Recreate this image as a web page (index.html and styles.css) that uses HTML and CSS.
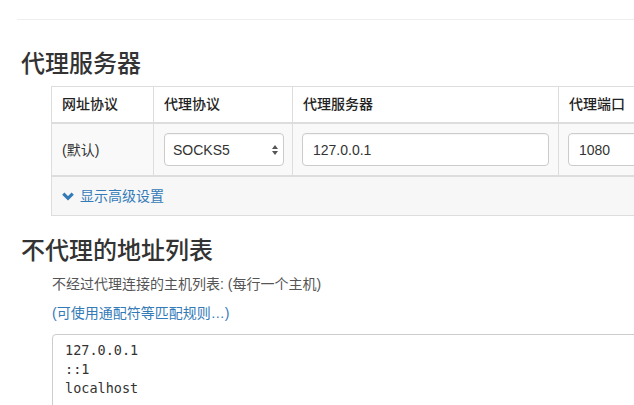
FILE: index.html
```html
<!DOCTYPE html>
<html lang="zh-CN">
<head>
<meta charset="utf-8">
<title>代理服务器</title>
<link rel="stylesheet" href="styles.css">
</head>
<body>
<div class="page">
  <hr class="rule">
  <section class="section">
    <h3 class="title">代理服务器</h3>
    <table class="proxy-table">
      <colgroup>
        <col class="c1"><col class="c2"><col class="c3"><col class="c4">
      </colgroup>
      <thead>
        <tr>
          <th>网址协议</th>
          <th>代理协议</th>
          <th>代理服务器</th>
          <th>代理端口</th>
        </tr>
      </thead>
      <tbody>
        <tr class="row-main">
          <td>(默认)</td>
          <td>
            <div class="select-wrap">
              <select class="control select"><option>SOCKS5</option></select>
              <svg class="select-arrows" width="8" height="12" viewBox="0 0 8 12"><path d="M4 1 L7 5 L1 5 Z" fill="#555"/><path d="M1 7 L7 7 L4 11 Z" fill="#555"/></svg>
            </div>
          </td>
          <td><input class="control input" type="text" value="127.0.0.1"></td>
          <td><input class="control input port" type="text" value="1080"></td>
        </tr>
        <tr class="row-adv">
          <td colspan="4">
            <a class="adv-link" href="#">
              <svg class="chevron" width="12" height="9" viewBox="0 0 12 9"><path d="M1.3 1.6 L6 6.3 L10.7 1.6" fill="none" stroke="#337ab7" stroke-width="3.2"/></svg>
              <span>显示高级设置</span>
            </a>
          </td>
        </tr>
      </tbody>
    </table>
  </section>
  <section class="section">
    <h3 class="title title-2">不代理的地址列表</h3>
    <p class="desc">不经过代理连接的主机列表: (每行一个主机)</p>
    <p class="help"><a href="#">(可使用通配符等匹配规则…)</a></p>
    <textarea class="bypass">127.0.0.1
::1
localhost</textarea>
  </section>
</div>
</body>
</html>
```
FILE: styles.css
```css
html, body {
  margin: 0;
  padding: 0;
  overflow: hidden;
  background: #fff;
}
body {
  font-family: "Liberation Sans", "Noto Sans CJK SC", sans-serif;
  font-size: 14px;
  line-height: 20px;
  color: #333;
}
.page {
  padding-left: 17px;
  width: 617px;
  height: 405px;
  overflow: hidden;
}
.rule {
  margin: 19px 0 0 0;
  border: 0;
  border-top: 1px solid #eee;
  height: 0;
}
.title {
  margin: 31px 0 9px 0;
  padding-left: 4px;
  font-size: 24px;
  line-height: 26px;
  font-weight: 500;
  color: #333;
}
.title-2 {
  margin-top: 22px;
  margin-bottom: 11px;
}
.proxy-table {
  margin-left: 34px;
  border-collapse: collapse;
  table-layout: fixed;
  width: 650px;
  border: 1px solid #ddd;
}
.c1 { width: 102px; }
.c2 { width: 139px; }
.c3 { width: 266px; }
.c4 { width: 143px; }
.proxy-table th {
  text-align: left;
  font-weight: 500;
  padding: 8px 10px;
  height: 19px;
  line-height: 19px;
  border-left: 1px solid #ddd;
  border-bottom: 2px solid #ddd;
  background: #fff;
  color: #222;
}
.proxy-table td {
  padding: 9px 9px;
  border-left: 1px solid #ddd;
  vertical-align: middle;
}
.row-main td {
  background: #f9f9f9;
  border-bottom: 2px solid #ddd;
}
.row-main td:first-child {
  padding-left: 10px;
}
.row-adv td {
  background: #f7f7f7;
  padding: 9px 10px;
  height: 20px;
}
.control {
  box-sizing: border-box;
  height: 33px;
  border: 1px solid #ccc;
  border-radius: 4px;
  background: #fff;
  font-family: "Liberation Sans", "Noto Sans CJK SC", sans-serif;
  font-size: 14px;
  color: #333;
  box-shadow: inset 0 1px 1px rgba(0,0,0,0.04);
}
.select-wrap {
  position: relative;
  width: 120px;
  margin-left: 1px;
}
.select {
  -webkit-appearance: none;
  appearance: none;
  width: 120px;
  padding: 0 8px;
  display: block;
}
.select-arrows {
  position: absolute;
  right: 5px;
  top: 11px;
}
.input {
  width: 100%;
  padding: 0 10px;
  display: block;
}
.port {
  width: 150px;
}
.adv-link {
  display: inline-flex;
  align-items: center;
  gap: 6px;
  color: #337ab7;
  text-decoration: none;
}
.chevron {
  display: block;
  margin-top: 1px;
}
.desc {
  margin: 0 0 11px 35px;
  color: #555;
  line-height: 18px;
}
.help {
  margin: 0 0 12px 35px;
  line-height: 18px;
}
.help a {
  color: #337ab7;
  text-decoration: none;
}
.bypass {
  display: block;
  margin-left: 35px;
  box-sizing: border-box;
  width: 640px;
  height: 110px;
  padding: 6px 12px;
  border: 1px solid #ccc;
  border-radius: 4px;
  font-family: "DejaVu Sans Mono", monospace;
  font-size: 13.5px;
  line-height: 19px;
  color: #333;
  resize: none;
  overflow: hidden;
}
```
